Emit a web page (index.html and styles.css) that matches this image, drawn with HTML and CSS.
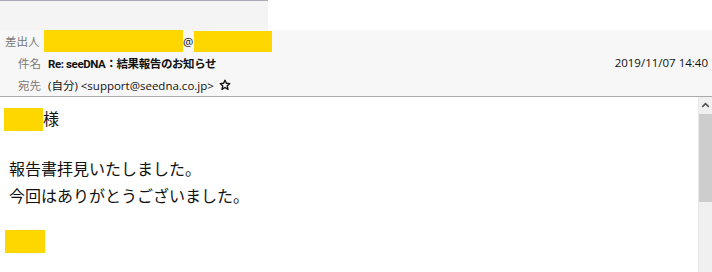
FILE: index.html
```html
<!DOCTYPE html>
<html lang="ja">

<head>
  <meta charset="UTF-8">
  <meta name="viewport" content="width=device-width, initial-scale=1.0">
  <title>Re: seeDNA：結果報告のお知らせ</title>

  <link rel="stylesheet" href="styles.css">
</head>

<body>
  <section id="mail">
    <div class="topbar">
      <div class="tab-strip"></div>
    </div>

    <div class="header">
      <div class="row row-from">
        <span class="label">差出人</span>
        <span class="mask mask-user"></span>
        <span class="value">@</span>
        <span class="mask mask-domain"></span>
      </div>
      <div class="row row-subject">
        <span class="label">件名</span>
        <span class="value subject">Re: seeDNA：結果報告のお知らせ</span>
        <span class="date">2019/11/07 14:40</span>
      </div>
      <div class="row row-to">
        <span class="label">宛先</span>
        <span class="value">(自分) &lt;support@seedna.co.jp&gt;</span>
        <svg class="star" width="12" height="12" viewBox="0 0 12 12">
          <path d="M6 1.2 L7.4 4.3 L10.8 4.6 L8.2 6.9 L9 10.3 L6 8.5 L3 10.3 L3.8 6.9 L1.2 4.6 L4.6 4.3 Z"
            fill="none" stroke="#111" stroke-width="1.4" stroke-linejoin="round" />
        </svg>
      </div>
    </div>

    <div class="body">
      <div class="message">
        <p class="greeting"><span class="mask mask-name"></span>様</p>
        <p class="text">報告書拝見いたしました。<br>今回はありがとうございました。</p>
        <p class="sign"><span class="mask mask-sign"></span></p>
      </div>
      <div class="scrollbar">
        <div class="arrow">
          <svg width="14" height="16" viewBox="0 0 14 16">
            <path d="M3.5 10 L7 6.5 L10.5 10" fill="none" stroke="#505050" stroke-width="1.6" />
          </svg>
        </div>
        <div class="thumb"></div>
        <div class="track"></div>
      </div>
    </div>
  </section>
</body>

</html>
```

FILE: styles.css
```css
* {
  margin: 0;
  padding: 0;
  box-sizing: border-box;
}

body {
  width: 712px;
  height: 272px;
  overflow: hidden;
  background-color: #fff;
  font-family: "Open Sans", "Noto Sans CJK JP", sans-serif;
  color: #111;
}

#mail {
  display: flex;
  flex-direction: column;
  height: 100%;
}

.topbar {
  height: 30px;
  background-color: #fff;
}

.tab-strip {
  width: 268px;
  height: 30px;
  background-color: #f4f4f5;
  border-top: 1px solid #a9acb8;
}

.header {
  background-color: #f7f7f7;
  border-bottom: 1px solid #aaa;
  height: 67px;
}

.row {
  display: flex;
  align-items: center;
  font-size: 11.5px;
}

.row-from {
  height: 22px;
}

.row-subject {
  height: 21px;
}

.row-to {
  height: 23px;
}

.label {
  width: 48px;
  padding-right: 7px;
  text-align: right;
  color: #777;
  font-size: 11.5px;
  flex-shrink: 0;
}

.row-from .label {
  width: 44px;
  text-align: left;
  padding-left: 5px;
  padding-right: 0;
}

.value {
  white-space: nowrap;
}

.subject {
  font-family: Roboto, "Noto Sans CJK JP", sans-serif;
  font-weight: bold;
  font-size: 11.5px;
  letter-spacing: -0.4px;
}

.date {
  margin-left: auto;
  margin-right: 4px;
  font-size: 11.5px;
}

.star {
  margin-left: 5px;
}

.mask {
  display: inline-block;
  background-color: #ffd700;
}

.mask-user {
  width: 139px;
  height: 22px;
}

.mask-domain {
  width: 78px;
  height: 21px;
  margin-left: 1px;
}

.body {
  flex: 1;
  display: flex;
}

.message {
  flex: 1;
  font-size: 16px;
  line-height: 27px;
}

.greeting {
  display: flex;
  align-items: center;
  margin-top: 9px;
  padding-left: 4px;
}

.mask-name {
  width: 39px;
  height: 23px;
}

.text {
  margin-top: 23px;
  padding-left: 9px;
}

.sign {
  margin-top: 20px;
  padding-left: 5px;
  display: flex;
}

.mask-sign {
  width: 40px;
  height: 23px;
}

.scrollbar {
  width: 14px;
  display: flex;
  flex-direction: column;
  background-color: #f0f0f0;
  border-left: 1px solid #e8e8e8;
}

.arrow {
  height: 17px;
  display: flex;
  justify-content: center;
  align-items: flex-start;
}

.thumb {
  height: 88px;
  background-color: #cdcdcd;
}

.track {
  flex: 1;
}
```
